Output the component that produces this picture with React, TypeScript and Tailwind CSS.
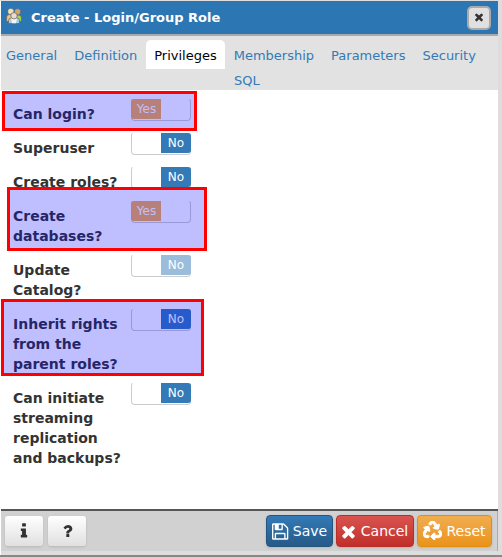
import React from "react";
import { FaRecycle } from "react-icons/fa";

const PATHS = {
  save: "M384 1536h768v-384h-768v384zm896 0h128v-896q0-14-10-38.5t-20-34.5l-281-281q-10-10-34-20t-39-10v416q0 40-28 68t-68 28h-576q-40 0-68-28t-28-68v-416h-128v1280h128v-416q0-40 28-68t68-28h832q40 0 68 28t28 68v416zm-384-928v-320q0-13-9.5-22.5t-22.5-9.5h-192q-13 0-22.5 9.5t-9.5 22.5v320q0 13 9.5 22.5t22.5 9.5h192q13 0 22.5-9.5t9.5-22.5zm640 32v928q0 40-28 68t-68 28h-1344q-40 0-68-28t-28-68v-1344q0-40 28-68t68-28h928q40 0 88 20t76 48l280 280q28 28 48 76t20 88z",
  times: "M1490 1322q0 40-28 68l-136 136q-28 28-68 28t-68-28l-294-294-294 294q-28 28-68 28t-68-28l-136-136q-28-28-28-68t28-68l294-294-294-294q-28-28-28-68t28-68l136-136q28-28 68-28t68 28l294 294 294-294q28-28 68-28t68 28l136 136q28 28 28 68t-28 68l-294 294 294 294q28 28 28 68z",
  info: "M1216 1344v128q0 26-19 45t-45 19h-512q-26 0-45-19t-19-45v-128q0-26 19-45t45-19h64v-384h-64q-26 0-45-19t-19-45v-128q0-26 19-45t45-19h384q26 0 45 19t19 45v576h64q26 0 45 19t19 45zm-128-1152v192q0 26-19 45t-45 19h-256q-26 0-45-19t-19-45v-192q0-26 19-45t45-19h256q26 0 45 19t19 45z",
  question: "M1088 1256v240q0 16-12 28t-28 12h-240q-16 0-28-12t-12-28v-240q0-16 12-28t28-12h240q16 0 28 12t12 28zm316-600q0 54-15.5 101t-35 76.5-55 59.5-57.5 43.5-61 35.5q-41 23-68.5 65t-27.5 67q0 17-12 32.5t-28 15.5h-240q-15 0-25.5-18.5t-10.5-37.5v-45q0-83 65-156.5t143-108.5q59-27 84-56t25-76q0-42-46.5-74t-107.5-32q-65 0-108 29-35 25-107 115-13 16-31 16-12 0-25-8l-164-125q-13-10-15.5-25t5.5-28q160-266 464-266 80 0 161 31t146 83 106 127.5 41 158.5z",
};

function Glyph({ name, className }: { name: keyof typeof PATHS; className: string }) {
  return (
    <svg viewBox="0 0 1792 1792" fill="currentColor" className={className}>
      <path d={PATHS[name]} />
    </svg>
  );
}

function GroupIcon() {
  return (
    <svg viewBox="0 0 16 16" className="h-4 w-4 shrink-0" stroke="#665f58" strokeWidth=".7">
      <path d="M.6 13.500V9q0-2.500 3-2.500t3 2.500v4.500z" fill="#f1c581" />
      <path d="M9.400 13.500V9q0-2 3-2t3 2.500v4z" fill="#9cdb4a" />
      <circle cx="4.800" cy="3.400" r="3" fill="#f3dfb0" strokeDasharray="1.4 .8" />
      <circle cx="11.600" cy="3.800" r="3" fill="#d3a36c" strokeDasharray="1.4 .8" />
      <path d="M2.500 15.600v-3.100q0-2.800 5.500-2.800t5.500 2.800v3.100z" fill="#9fcdf0" />
      <path d="M5 10h6l-1 5.200H6z" fill="#f4f4f4" stroke="none" />
      <circle cx="8" cy="7.800" r="3.200" fill="#e5dcd8" />
    </svg>
  );
}

type Kind = "yes" | "no" | "faded";

function Toggle({ kind }: { kind: Kind }) {
  const side =
    kind === "yes"
      ? "self-start bg-[#f5ab4b] text-white rounded-l-[3px]"
      : kind === "no"
        ? "self-end bg-[#337ab7] text-white rounded-r-[3px]"
        : "self-end bg-[#99bddb] text-white rounded-r-[3px]";
  return (
    <div className="flex h-[23px] w-[60px] flex-col rounded border border-t-transparent border-[#ccc]">
      <div className={`flex h-5 w-[30px] shrink-0 items-center justify-center pb-px text-[12px] leading-[18px] ${kind === "yes" ? "-ml-px pl-px" : "-mr-px"} ${side}`}>
        {kind === "yes" ? "Yes" : "No"}
      </div>
    </div>
  );
}

const ROWS: { label: string; kind: Kind; mark?: string }[] = [
  { label: "Can login?", kind: "yes", mark: "left-[1px] -top-[7px] h-10 w-[195px]" },
  { label: "Superuser", kind: "no" },
  { label: "Create roles?", kind: "no" },
  { label: "Create databases?", kind: "yes", mark: "left-[6px] -top-[13px] h-16 w-[200px]" },
  { label: "Update Catalog?", kind: "faded" },
  { label: "Inherit rights from the parent roles?", kind: "no", mark: "left-0 -top-[9px] h-[77px] w-[203px]" },
  { label: "Can initiate streaming replication and backups?", kind: "no" },
];

const TABS = ["General", "Definition", "Privileges", "Membership", "Parameters", "Security"];

export default function App() {
  return (
    <div className="flex h-[557px] w-[502px] flex-col bg-[#ddd] font-['DejaVu_Sans',sans-serif] text-[#333]">
      <div className="mt-px mr-1 flex h-[554px] flex-col border-l border-white bg-[#d1d1d1]">
        <header className="flex h-[35px] shrink-0 items-center border-b-2 border-[#aaa] bg-[#2c76b4] pr-[7px] pl-[5px] text-[13px] font-bold text-white">
          <div className="-mt-[3px]">
            <GroupIcon />
          </div>
          <span className="ml-[9px] grow">Create - Login/Group Role</span>
          <button className="flex h-6 w-6 items-center justify-center rounded-[5px] border-2 border-[#aaa] bg-[#e0e0e0] text-[#333]">
            <Glyph name="times" className="-mt-px h-3 w-3" />
          </button>
        </header>
        <nav className="h-[54px] shrink-0 bg-[#e2e2e2] pt-1 text-[13px] leading-5 text-[#337ab7]">
          <div className="flex">
            {TABS.map((t) => (
              <span key={t} className={`mr-px h-[29px] px-2 pt-[6px] first:pl-[5px] ${t === "Privileges" ? "rounded-t-[5px] bg-white text-black" : ""}`}>
                {t}
              </span>
            ))}
          </div>
          <div className="pt-0.5 pl-[233px] leading-5">SQL</div>
        </nav>
        <main className="flex h-[419px] shrink-0 flex-col gap-2 bg-white pt-[8px]">
          {ROWS.map((r) => (
            <div key={r.label} className="relative flex">
              <div className="w-[130px] pt-[6px] pr-2 pl-3 text-[14px] leading-5 font-bold">{r.label}</div>
              <Toggle kind={r.kind} />
              {r.mark && <div className={`absolute border-[3px] border-[#f00] bg-[#0000ff40] bg-clip-padding ${r.mark}`} />}
            </div>
          ))}
        </main>
        <footer className="flex h-[46px] shrink-0 flex-col border-t-2 border-t-[#555] bg-[#ddd]">
          <div className="flex h-10 border-r border-[#aaa] bg-[#d1d1d1] pt-1 pr-[5px] pl-1 text-[14px] text-white">
            <button className="mt-px flex h-[30px] w-[38px] items-center justify-center rounded-[3px] bg-linear-to-b from-white to-[#e0e0e0] text-[#333] shadow-sm">
              <Glyph name="info" className="h-[18px] w-[18px]" />
            </button>
            <button className="mt-px ml-[5px] flex h-[30px] w-[38px] items-center justify-center rounded-[3px] bg-linear-to-b from-white to-[#e0e0e0] text-[#333] shadow-sm">
              <Glyph name="question" className="h-[18px] w-[18px] pl-px" />
            </button>
            <button className="ml-auto flex h-8 w-[67px] items-center justify-center gap-[2px] rounded border border-[#245580] bg-linear-to-b from-[#337ab7] to-[#265a88] shadow-sm">
              <Glyph name="save" className="h-[19px] w-[19px]" />
              Save
            </button>
            <button className="ml-[3px] flex h-8 w-[78px] items-center justify-center gap-[3px] rounded border border-[#b92c28] bg-linear-to-b from-[#d9534f] to-[#c12e2a] pr-[3px] shadow-sm">
              <Glyph name="times" className="h-[19px] w-[19px]" />
              Cancel
            </button>
            <button className="ml-[3px] flex h-8 w-[75px] items-center justify-center gap-1 rounded border border-[#e38d13] bg-linear-to-b from-[#f0ad4e] to-[#eb9316] shadow-sm">
              <FaRecycle className="-mt-0.5 h-[19px] w-[19px]" stroke="currentColor" strokeWidth={26} />
              Reset
            </button>
          </div>
        </footer>
      </div>
      <div className="h-0.5 bg-[#888]" />
    </div>
  );
}
